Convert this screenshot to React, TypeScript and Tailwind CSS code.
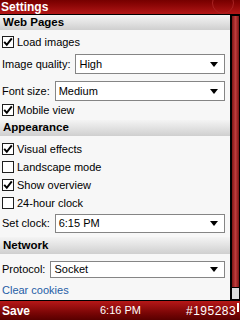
import React from "react";

const font = { fontFamily: '"Liberation Sans", Arial, sans-serif' };

const Header = ({ title, className = "" }: { title: string; className?: string }) => (
  <div
    className={`flex items-center pl-[3px] text-[11.5px] font-bold text-black bg-gradient-to-b from-[#f4f4f4] via-[#e2e2e2] to-[#cfcfcf] ${className}`}
  >
    {title}
  </div>
);

const CheckRow = ({ label, checked, className = "" }: { label: string; checked: boolean; className?: string }) => (
  <div className={`flex items-center h-[18px] pl-[2px] gap-[3px] text-[11px] text-black ${className}`}>
    <div className="w-[12px] h-[12px] border border-[#1e1e1e] bg-white flex items-center justify-center">
      {checked && (
        <svg width="10" height="10" viewBox="0 0 10 10">
          <path d="M1.2 4.8 L3.8 7.8 L8.8 1.4" stroke="#000" strokeWidth="2" fill="none" />
        </svg>
      )}
    </div>
    <span>{label}</span>
  </div>
);

const SelectRow = ({ label, value, className = "" }: { label: string; value: string; className?: string }) => (
  <div className={`flex items-stretch pl-[2px] pr-[5px] gap-[5px] text-[11px] text-black ${className}`}>
    <span className="flex items-center">{label}</span>
    <div className="flex-1 flex items-center justify-between border border-[#858585] bg-white pl-[3px] pr-[6px]">
      <span>{value}</span>
      <svg width="8" height="5" viewBox="0 0 8 5">
        <polygon points="0,0 8,0 4,5" fill="#000" />
      </svg>
    </div>
  </div>
);

export default function App() {
  return (
    <div className="w-[240px] h-[320px] flex flex-col bg-[#f7f7f7] overflow-hidden" style={font}>
      <div className="relative h-[15px] flex items-center pl-[1px] border-b border-black bg-gradient-to-b from-[#760000] to-[#b31616] overflow-hidden">
        <span className="text-[12px] font-bold text-white leading-none">Settings</span>
        <div className="absolute right-[6px] top-[-8px] w-[22px] h-[22px] rounded-full border border-[#a82222]" />
      </div>

      <div className="flex flex-1">
        <div className="w-[230px] flex flex-col">
          <Header title="Web Pages" className="h-[15px]" />
          <CheckRow label="Load images" checked className="h-[24px]" />
          <SelectRow label="Image quality:" value="High" className="h-[20px]" />
          <SelectRow label="Font size:" value="Medium" className="h-[20px] mt-[7px]" />
          <CheckRow label="Mobile view" checked />
          <Header title="Appearance" className="h-[16px] mt-[1px]" />
          <CheckRow label="Visual effects" checked className="mt-[4px]" />
          <CheckRow label="Landscape mode" checked={false} />
          <CheckRow label="Show overview" checked />
          <CheckRow label="24-hour clock" checked={false} />
          <SelectRow label="Set clock:" value="6:15 PM" className="h-[19px] mt-[2px]" />
          <Header title="Network" className="h-[17px] mt-[4px]" />
          <SelectRow label="Protocol:" value="Socket" className="h-[17px] mt-[7px]" />
          <div className="h-[15px] mt-[5px] pl-[2px] flex items-center text-[11px] text-[#1f5ea6]">Clear cookies</div>
        </div>
        <div className="w-[10px] flex flex-col bg-[#e6e6e6] border-l border-black">
          <div className="h-[273px] border border-black bg-gradient-to-r from-[#7e1414] via-[#bf3c3c] to-[#7e1414]" />
          <div className="flex-1 border-x border-b border-black bg-[#dcdcdc]" />
        </div>
      </div>

      <div className="relative h-[20px] flex items-center border-t border-black bg-gradient-to-b from-[#b71818] to-[#580000] text-white">
        <span className="pl-[2px] text-[12px] font-bold">Save</span>
        <span className="absolute left-[100px] text-[11px]">6:16 PM</span>
        <span className="absolute left-[186px] text-[12px] tracking-[0.5px]">#195283</span>
        <div className="absolute left-[237px] top-[2px] w-[2px] h-[9px] bg-white" />
      </div>
    </div>
  );
}
